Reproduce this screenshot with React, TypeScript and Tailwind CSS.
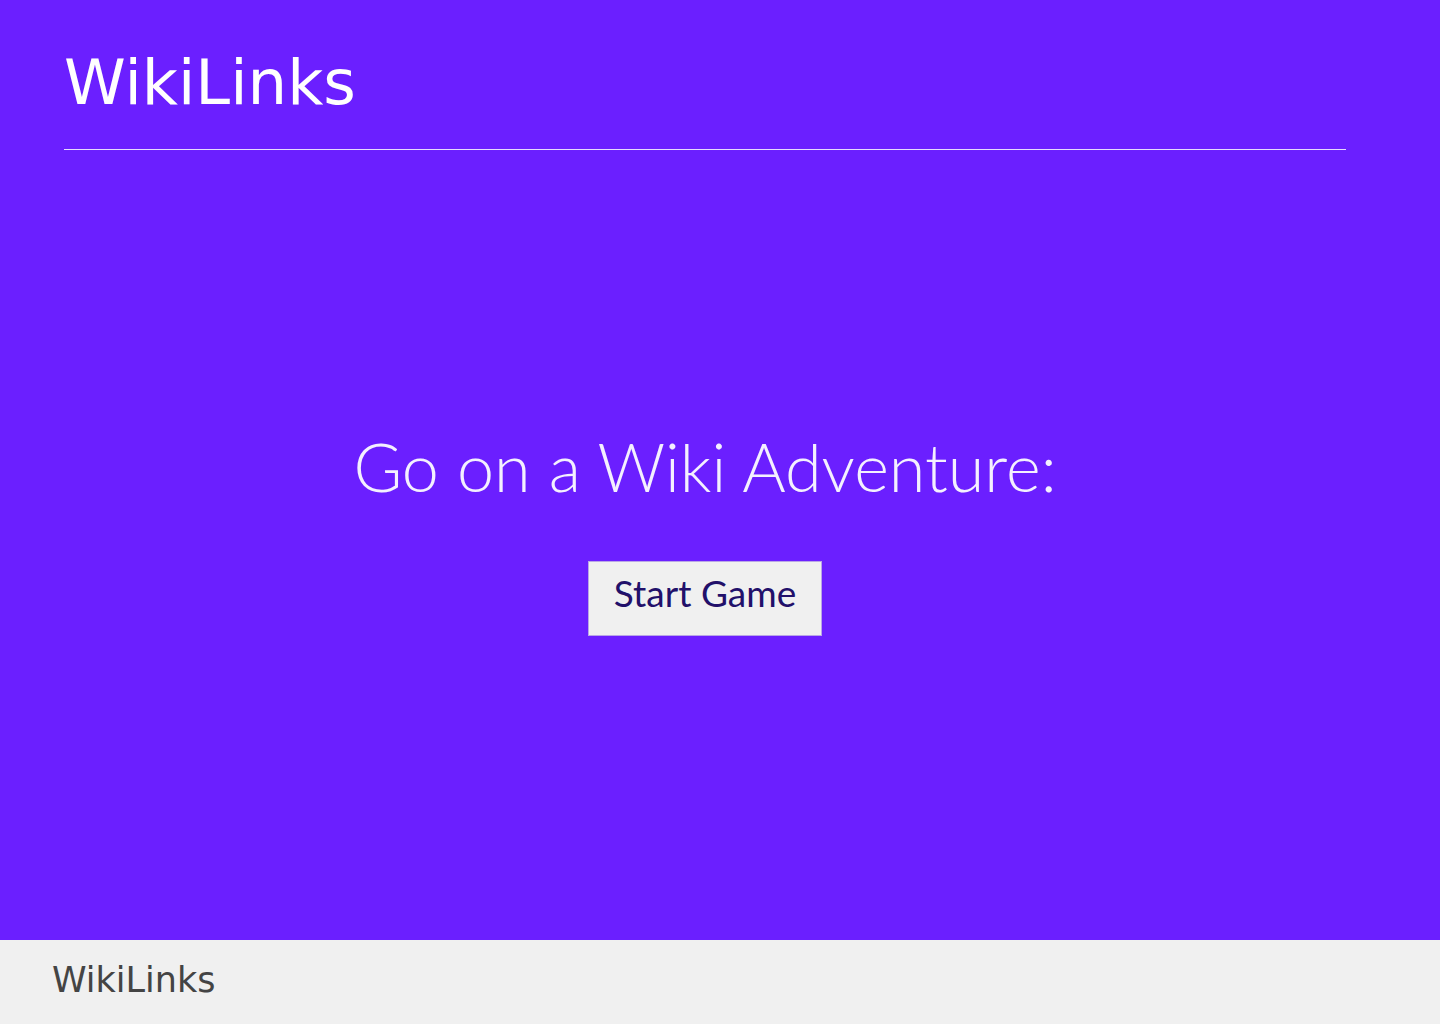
export default function App() {
  return (
    <div className="flex min-h-[1024px] w-full flex-col bg-[#6b1fff]">
      <div className="flex flex-1 flex-col pl-[64px] pr-[94px]">
        <header className="flex h-[150px] items-center border-b border-[#e6dcff]">
          <h1
            className="mt-[18px] text-[62.5px] leading-none text-white"
            style={{ fontFamily: '"DejaVu Sans", sans-serif' }}
          >
            WikiLinks
          </h1>
        </header>
        <main className="flex flex-1 flex-col items-center pt-[283px]">
          <h2
            className="text-[66.5px] font-light leading-none text-[#f4f0ff]"
            style={{ fontFamily: 'Lato, sans-serif' }}
          >
            Go on a Wiki Adventure:
          </h2>
          <button
            className="mt-[61px] h-[75px] w-[234px] border border-[#b9a6e6] bg-[#f0f0f0] pb-[10px] text-[37px] text-[#22106a]"
            style={{ fontFamily: 'Lato, sans-serif' }}
          >
            Start Game
          </button>
        </main>
      </div>
      <footer className="flex h-[84px] items-center bg-[#f0f0f0] pb-[3px] pl-[52px]">
        <span
          className="text-[35px] leading-none text-[#444444]"
          style={{ fontFamily: '"DejaVu Sans", sans-serif' }}
        >
          WikiLinks
        </span>
      </footer>
    </div>
  );
}
